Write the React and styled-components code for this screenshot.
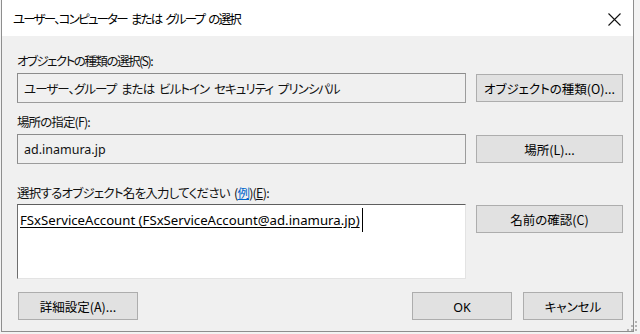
import React from 'react'
import styled, { createGlobalStyle } from 'styled-components'

const GlobalStyle = createGlobalStyle`
    html, body {
        margin: 0;
        padding: 0;
        background: #f3f3f3;
    }
    body {
        font-family: "Noto Sans CJK JP", "Noto Sans", sans-serif;
        font-feature-settings: "palt";
        font-size: 12.5px;
        color: #111;
    }
`;

const Latin = styled.span`
    font-family: "Noto Sans", "Noto Sans CJK JP", sans-serif;
    font-size: ${p => p.$size || '12.5px'};
    letter-spacing: 0;
    word-spacing: 0;
`;

const Window = styled.div`
    width: 633px;
    height: 332px;
    margin-left: 1px;
    border: 1px solid #8e8e8e;
    border-top: none;
    box-sizing: border-box;
    background: #f0f0f0;
    display: flex;
    flex-direction: column;
`;

const TitleBar = styled.div`
    height: 36px;
    background: #fff;
    display: flex;
    align-items: center;
    justify-content: space-between;
    padding-left: 11px;
    padding-right: 7px;
    font-size: 12.5px;
    letter-spacing: -1.8px;
    word-spacing: 3px;
    color: #000;
`;

const CloseButton = styled.div`
    width: 24px;
    height: 24px;
    display: flex;
    align-items: center;
    justify-content: center;
    margin-top: 2px;
`;

const Body = styled.div`
    flex: 1;
    padding: 17px 10px 0 15px;
    display: flex;
    flex-direction: column;
`;

const Label = styled.div`
    line-height: 16px;
    height: 16px;
    margin-top: ${p => p.$top || 0}px;
    margin-bottom: ${p => p.$bottom || 4}px;
    white-space: nowrap;
    letter-spacing: ${p => p.$spacing || -1.2}px;
    word-spacing: 2px;

    .link {
        color: #0066cc;
        text-decoration: underline;
    }
    .key {
        text-decoration: underline;
    }
`;

const Row = styled.div`
    display: grid;
    grid-template-columns: 449px 147px;
    column-gap: 10px;
    align-items: ${p => p.$align || 'center'};
`;

const ReadField = styled.div`
    height: 30px;
    box-sizing: border-box;
    border: 1px solid #8c8c8c;
    border-right-color: #9c9c9c;
    border-bottom-color: #9c9c9c;
    background: #f0f0f0;
    display: flex;
    align-items: center;
    padding-left: 6px;
    white-space: nowrap;
    letter-spacing: -0.95px;
    word-spacing: 3px;
`;

const InputArea = styled.div`
    height: 75px;
    box-sizing: border-box;
    border: 1px solid #e3e3e3;
    border-top-color: #5e5e5e;
    border-left-color: #6e6e6e;
    background: #fff;
    padding: 3px 2px;
    line-height: 19px;
    white-space: nowrap;
    color: #000;

    .name {
        text-decoration: underline;
        text-underline-offset: 2px;
    }
`;

const Caret = styled.span`
    display: inline-block;
    width: 1px;
    height: 24px;
    background: #000;
    vertical-align: -7px;
    margin-left: 2px;
`;

const Button = styled.button`
    height: 28px;
    width: ${p => p.$width || '147px'};
    box-sizing: border-box;
    border: 1px solid #adadad;
    background: #e1e1e1;
    font: inherit;
    color: #000;
    padding: 0;
    margin-top: ${p => p.$top || 0}px;
    cursor: default;
`;

const Footer = styled.div`
    display: flex;
    align-items: center;
    margin-top: 13px;
    padding-left: 1px;

    .spacer {
        flex: 1;
    }
    .ok {
        margin-right: 11px;
    }
`;

const Grip = styled.svg`
    position: absolute;
    right: 2px;
    bottom: 2px;
`;

const Frame = styled.div`
    position: relative;
    width: 640px;
    height: 334px;
`;

function ResizeGrip() {
    const dots = [[8, 0], [8, 4], [4, 4], [8, 8], [4, 8], [0, 8]]
    return (
        <Grip width="11" height="11" viewBox="0 0 11 11">
            {dots.map(([x, y], i) => (
                <rect key={i} x={x} y={y} width="2" height="2" fill="#b4b4b4" />
            ))}
        </Grip>
    )
}

export default function App() {
    return (
        <Frame>
            <GlobalStyle />
            <Window>
                <TitleBar>
                    <span>ユーザー、コンピューター または グループ の選択</span>
                    <CloseButton>
                        <svg width="13" height="13" viewBox="0 0 13 13">
                            <path d="M0.5 0.5 L12.5 12.5 M12.5 0.5 L0.5 12.5" stroke="#111" strokeWidth="1.1" />
                        </svg>
                    </CloseButton>
                </TitleBar>
                <Body>
                    <Label $spacing={-1.5}>オブジェクトの種類の選択(S):</Label>
                    <Row>
                        <ReadField>ユーザー、グループ または ビルトイン セキュリティ プリンシパル</ReadField>
                        <Button>オブジェクトの種類(O)...</Button>
                    </Row>

                    <Label $top={11} $spacing={-0.9}>場所の指定(F):</Label>
                    <Row>
                        <ReadField><Latin>ad.inamura.jp</Latin></ReadField>
                        <Button>場所(L)...</Button>
                    </Row>

                    <Label $top={21} $bottom={3} $spacing={-0.75}>
                        選択するオブジェクト名を入力してください (<span className="link">例</span>)(<span className="key">E</span>):
                    </Label>
                    <Row $align="start">
                        <InputArea>
                            <Latin className="name" $size="13.2px">FSxServiceAccount (FSxServiceAccount@ad.inamura.jp)</Latin>
                            <Caret />
                        </InputArea>
                        <Button $top={1}>名前の確認(C)</Button>
                    </Row>

                    <Footer>
                        <Button $width="120px">詳細設定(A)...</Button>
                        <span className="spacer" />
                        <Button className="ok" $width="100px"><Latin>OK</Latin></Button>
                        <Button $width="100px">キャンセル</Button>
                    </Footer>
                </Body>
            </Window>
            <ResizeGrip />
        </Frame>
    )
}
